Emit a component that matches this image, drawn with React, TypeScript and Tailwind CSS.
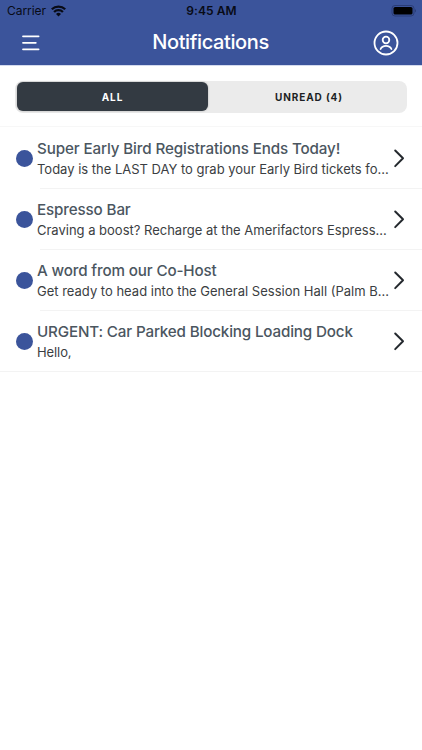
type Notice = { title: string; body: string; titleClass: string; bodyClass: string };

const notices: Notice[] = [
  {
    title: 'Super Early Bird Registrations Ends Today!',
    body: 'Today is the LAST DAY to grab your Early Bird tickets fo...',
    titleClass: 'tracking-[-0.13px]',
    bodyClass: 'tracking-[-0.01px]',
  },
  {
    title: 'Espresso Bar',
    body: 'Craving a boost? Recharge at the Amerifactors Espress...',
    titleClass: 'tracking-[-0.14px]',
    bodyClass: 'tracking-[-0.01px]',
  },
  {
    title: 'A word from our Co-Host',
    body: 'Get ready to head into the General Session Hall (Palm B...',
    titleClass: 'tracking-[-0.14px]',
    bodyClass: 'tracking-[0px]',
  },
  {
    title: 'URGENT: Car Parked Blocking Loading Dock',
    body: 'Hello,',
    titleClass: 'tracking-[-0.16px]',
    bodyClass: 'tracking-[-0.1px]',
  },
];

function WifiIcon() {
  return (
    <svg width="15" height="12" viewBox="0 0 15 12" fill="none" stroke="#080b16" strokeWidth="2.3">
      <path d="M0.8 4.3a9.6 9.6 0 0 1 13.4 0" />
      <path d="M3.1 7a6.2 6.2 0 0 1 8.8 0" />
      <path d="M5 9a3.6 3.6 0 0 1 5 0L7.5 11.5z" fill="#080b16" stroke="none" />
    </svg>
  );
}

function BatteryIcon() {
  return (
    <svg width="25" height="12" viewBox="0 0 25 12" fill="none">
      <rect x="1" y="0.5" width="22" height="10.5" rx="3" stroke="#2b3d76" />
      <rect x="2.5" y="2" width="19" height="7.5" rx="1.6" fill="#000" />
      <path d="M24 4.2c1 .3 1 2.9 0 3.2z" fill="#25346b" />
    </svg>
  );
}

function MenuIcon() {
  return (
    <svg width="18" height="16" viewBox="0 0 18 16" stroke="#fff" strokeWidth="1.8" strokeLinecap="round">
      <path d="M1 1.3h15.6M1 7.8h12.8M1 14.3h15.6" />
    </svg>
  );
}

function ProfileIcon() {
  return (
    <svg width="26" height="26" viewBox="0 0 26 26" fill="none" stroke="#fff" strokeWidth="1.8" strokeLinecap="round">
      <circle cx="13" cy="13" r="11.5" />
      <circle cx="13" cy="10" r="3.3" />
      <path d="M7.6 19c1-2.3 3-3.2 5.4-3.2s4.4.9 5.4 3.2" />
    </svg>
  );
}

function Chevron() {
  return (
    <svg width="13" height="20" viewBox="0 0 13 20" fill="none" stroke="#24292e" strokeWidth="2" strokeLinecap="round" strokeLinejoin="round">
      <path d="M2.2 1.5L10 9.3L2.2 17.1" />
    </svg>
  );
}

export default function App() {
  return (
    <div className="h-[750px] w-[422px] overflow-hidden bg-white font-['Inter',sans-serif]">
      <header className="h-[66px] border-b border-[#d3daee] bg-[#3b549b] bg-clip-padding">
        <div className="grid h-[22px] grid-cols-3 items-center pr-[6px] pl-[7px] text-[#080b16]">
          <div className="flex items-center gap-[5px] text-[12px] leading-4">
            <span className="tracking-[-0.05px]">Carrier</span>
            <WifiIcon />
          </div>
          <span className="text-center text-[12px] leading-4 font-semibold tracking-[0.1px]">9:45 AM</span>
          <div className="flex justify-end">
            <BatteryIcon />
          </div>
        </div>
        <div className="flex h-[42px] items-center justify-between pr-[23px] pl-[22px]">
          <button className="flex w-[26px]"><MenuIcon /></button>
          <h1 className="pb-[2px] text-[20px] leading-6 font-medium tracking-[-0.38px] text-white">Notifications</h1>
          <button className="flex w-[26px]"><ProfileIcon /></button>
        </div>
      </header>
      <div className="flex h-[61px] items-center border-b border-[#f7f7f7] px-[15px] pt-px">
        <div className="grid h-8 w-full grid-cols-2 items-center rounded-[8px] bg-[#ebebeb] text-center text-[10px] font-bold tracking-[0.9px]">
          <button className="ml-[2px] h-[29px] w-[191px] rounded-[6px] bg-[#333a42] pt-px text-white shadow-[0_0_2px_rgba(0,0,0,0.3)]">ALL</button>
          <button className="pt-px text-[#1c1f24]">UNREAD (4)</button>
        </div>
      </div>
      <ul className="pt-px">
        {notices.map((n, i) => (
          <li key={n.title} className="relative flex h-[61px] items-center pl-4">
            <span className="size-[17px] shrink-0 rounded-full bg-[#3b549b]" />
            <div className="ml-1 w-[356px] shrink-0 whitespace-nowrap">
              <h2 className={`text-[15.2px] leading-[21px] font-medium text-[#4b565f] ${n.titleClass}`}>{n.title}</h2>
              <p className={`text-[13px] leading-[21px] text-[#3b3e42] ${n.bodyClass}`}>{n.body}</p>
            </div>
            <Chevron />
            <span className={`absolute right-0 bottom-0 h-px bg-[#f3f3f3] ${i === notices.length - 1 ? 'left-0' : 'left-10'}`} />
          </li>
        ))}
      </ul>
    </div>
  );
}
